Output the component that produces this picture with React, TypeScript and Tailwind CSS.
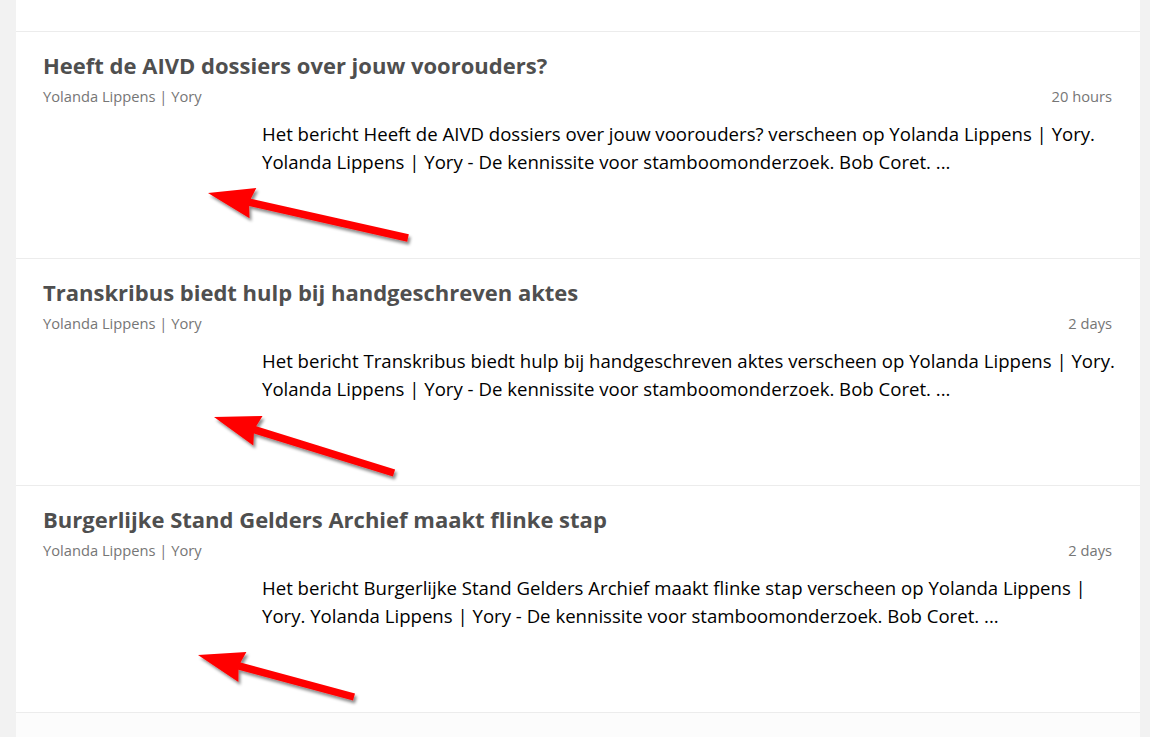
import React from "react";

type Pt = [number, number];

function Arrow({ tip, tail }: { tip: Pt; tail: Pt }) {
  const dx = tail[0] - tip[0];
  const dy = tail[1] - tip[1];
  const len = Math.hypot(dx, dy);
  const ux = dx / len;
  const uy = dy / len;
  const px = -uy;
  const py = ux;
  const headLen = 46;
  const hw = 31;
  const sw = 7.5;
  const bx = tip[0] + ux * headLen;
  const by = tip[1] + uy * headLen;
  const pts: Pt[] = [
    tip,
    [bx - (px * hw) / 2, by - (py * hw) / 2],
    [bx - (px * sw) / 2 - ux * 3, by - (py * sw) / 2 - uy * 3],
    [tail[0] - (px * sw) / 2, tail[1] - (py * sw) / 2],
    [tail[0] + (px * sw) / 2, tail[1] + (py * sw) / 2],
    [bx + (px * sw) / 2 - ux * 3, by + (py * sw) / 2 - uy * 3],
    [bx + (px * hw) / 2, by + (py * hw) / 2],
  ];
  return (
    <polygon
      points={pts.map((p) => `${p[0].toFixed(1)},${p[1].toFixed(1)}`).join(" ")}
      fill="#ff0000"
      filter="url(#arrowShadow)"
    />
  );
}

const items = [
  {
    title: "Heeft de AIVD dossiers over jouw voorouders?",
    time: "20 hours",
    lines: [
      "Het bericht Heeft de AIVD dossiers over jouw voorouders? verscheen op Yolanda Lippens | Yory.",
      "Yolanda Lippens | Yory - De kennissite voor stamboomonderzoek. Bob Coret. ...",
    ],
    tip: [192, 161] as Pt,
    tail: [392, 206] as Pt,
  },
  {
    title: "Transkribus biedt hulp bij handgeschreven aktes",
    time: "2 days",
    lines: [
      "Het bericht Transkribus biedt hulp bij handgeschreven aktes verscheen op Yolanda Lippens | Yory.",
      "Yolanda Lippens | Yory - De kennissite voor stamboomonderzoek. Bob Coret. ...",
    ],
    tip: [198, 158] as Pt,
    tail: [378, 214] as Pt,
  },
  {
    title: "Burgerlijke Stand Gelders Archief maakt flinke stap",
    time: "2 days",
    lines: [
      "Het bericht Burgerlijke Stand Gelders Archief maakt flinke stap verscheen op Yolanda Lippens |",
      "Yory. Yolanda Lippens | Yory - De kennissite voor stamboomonderzoek. Bob Coret. ...",
    ],
    tip: [182, 169] as Pt,
    tail: [338, 211] as Pt,
  },
];

export default function App() {
  return (
    <div
      className="min-h-[737px] bg-[#f2f2f2] pl-4 pr-[10px]"
      style={{ fontFamily: '"Open Sans", "Noto Sans", sans-serif' }}
    >
      <svg width="0" height="0" className="absolute">
        <defs>
          <filter id="arrowShadow" x="-20%" y="-50%" width="140%" height="200%">
            <feDropShadow dx="2" dy="3" stdDeviation="1.6" floodColor="#000" floodOpacity="0.45" />
          </filter>
        </defs>
      </svg>
      <div className="bg-white">
        <div className="h-[32px] border-b border-[#ececec]" />
        {items.map((it, i) => (
          <div key={i} className="relative h-[227px] border-b border-[#ececec] pl-[27px] pr-[28px] pt-[19px]">
            <h2 className="text-[22px] font-bold leading-[28px] text-[#4f4f4f]">{it.title}</h2>
            <div className="mt-[7px] flex justify-between text-[14.7px] leading-[20px] text-[#767676]">
              <span>Yolanda Lippens | Yory</span>
              <span>{it.time}</span>
            </div>
            <p className="ml-[219px] mt-[14px] text-[18.6px] leading-[28px] text-black">
              {it.lines.map((l, j) => (
                <span key={j} className="block whitespace-nowrap">
                  {l}
                </span>
              ))}
            </p>
            <svg className="pointer-events-none absolute left-0 top-0" width="1124" height="227">
              <Arrow tip={it.tip} tail={it.tail} />
            </svg>
          </div>
        ))}
        <div className="h-[24px] bg-[#fcfcfc]" />
      </div>
    </div>
  );
}
